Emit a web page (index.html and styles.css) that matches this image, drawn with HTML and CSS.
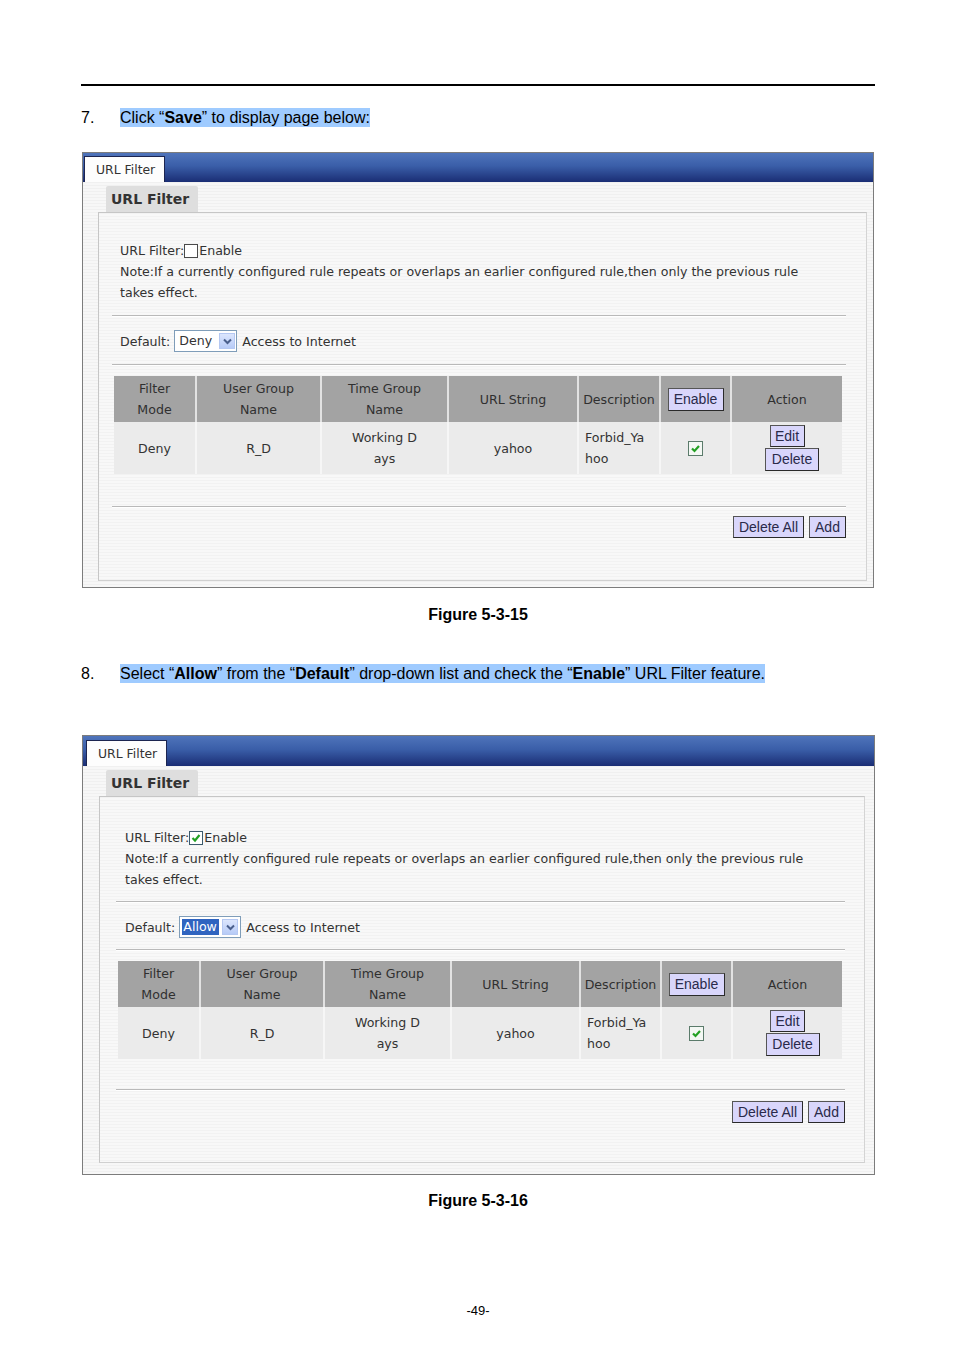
FILE: index.html
```html
<!DOCTYPE html>
<html>
<head>
<meta charset="utf-8">
<link rel="stylesheet" href="styles.css">
</head>
<body>
<div class="page">
  <div class="rule"></div>

  <p class="step step-7"><span class="num">7.</span><span class="hl">Click “<b>Save</b>” to display page below:</span></p>

  <div class="fig fig-a">
    <div class="fig-head"><div class="tab">URL Filter</div></div>
    <div class="fig-body">
      <div class="sec-tab">URL Filter</div>
      <div class="panel">
        <div class="info">
          <div class="line">URL Filter:<span class="cb"></span>Enable</div>
          <div class="line">Note:If a currently configured rule repeats or overlaps an earlier configured rule,then only the previous rule</div>
          <div class="line">takes effect.</div>
        </div>
        <div class="sep"></div>
        <div class="default-row">Default:<span class="select"><span class="sel-val">Deny</span><span class="sel-btn"><svg width="13" height="13" viewBox="0 0 13 13"><path d="M3 4.5 L6.5 8 L10 4.5" stroke="#4a5f8c" stroke-width="2" fill="none"/></svg></span></span>Access to Internet</div>
        <div class="sep"></div>
        <table class="rules">
          <colgroup><col class="c1"><col class="c2"><col class="c3"><col class="c4"><col class="c5"><col class="c6"><col class="c7"></colgroup>
          <tr class="hrow">
            <th>Filter<br>Mode</th>
            <th>User Group<br>Name</th>
            <th>Time Group<br>Name</th>
            <th>URL String</th>
            <th>Description</th>
            <th><span class="btn btn-enable">Enable</span></th>
            <th>Action</th>
          </tr>
          <tr class="drow">
            <td>Deny</td>
            <td>R_D</td>
            <td>Working D<br>ays</td>
            <td>yahoo</td>
            <td class="left">Forbid_Ya<br>hoo</td>
            <td><svg class="chk" width="15" height="15" viewBox="0 0 15 15"><rect x="0.5" y="0.5" width="14" height="14" fill="#f4f8f4" stroke="#5b7b6b"/><path d="M4 7.5 L6.5 10 L11 5" stroke="#23a023" stroke-width="2.2" fill="none"/></svg></td>
            <td class="act"><span class="btn btn-edit">Edit</span><span class="btn btn-del">Delete</span></td>
          </tr>
        </table>
        <div class="sep sep-low"></div>
        <div class="btn-row"><span class="btn btn-delall">Delete All</span><span class="btn btn-add">Add</span></div>
      </div>
    </div>
  </div>

  <p class="caption cap-a">Figure 5-3-15</p>

  <p class="step step-8"><span class="num">8.</span><span class="hl">Select “<b>Allow</b>” from the “<b>Default</b>” drop-down list and check the “<b>Enable</b>” URL Filter feature.</span></p>

  <div class="fig fig-b">
    <div class="fig-head"><div class="tab">URL Filter</div></div>
    <div class="fig-body">
      <div class="sec-tab">URL Filter</div>
      <div class="panel">
        <div class="info">
          <div class="line">URL Filter:<svg class="cb-on" width="14" height="14" viewBox="0 0 14 14"><rect x="0.5" y="0.5" width="13" height="13" fill="#fff" stroke="#3c5a6c"/><path d="M3.5 7 L6 9.5 L10.5 4" stroke="#22a022" stroke-width="2.2" fill="none"/></svg>Enable</div>
          <div class="line">Note:If a currently configured rule repeats or overlaps an earlier configured rule,then only the previous rule</div>
          <div class="line">takes effect.</div>
        </div>
        <div class="sep"></div>
        <div class="default-row">Default:<span class="select"><span class="sel-val sel-hl">Allow</span><span class="sel-btn"><svg width="13" height="13" viewBox="0 0 13 13"><path d="M3 4.5 L6.5 8 L10 4.5" stroke="#4a5f8c" stroke-width="2" fill="none"/></svg></span></span>Access to Internet</div>
        <div class="sep"></div>
        <table class="rules">
          <colgroup><col class="c1"><col class="c2"><col class="c3"><col class="c4"><col class="c5"><col class="c6"><col class="c7"></colgroup>
          <tr class="hrow">
            <th>Filter<br>Mode</th>
            <th>User Group<br>Name</th>
            <th>Time Group<br>Name</th>
            <th>URL String</th>
            <th>Description</th>
            <th><span class="btn btn-enable">Enable</span></th>
            <th>Action</th>
          </tr>
          <tr class="drow">
            <td>Deny</td>
            <td>R_D</td>
            <td>Working D<br>ays</td>
            <td>yahoo</td>
            <td class="left">Forbid_Ya<br>hoo</td>
            <td><svg class="chk" width="15" height="15" viewBox="0 0 15 15"><rect x="0.5" y="0.5" width="14" height="14" fill="#f4f8f4" stroke="#5b7b6b"/><path d="M4 7.5 L6.5 10 L11 5" stroke="#23a023" stroke-width="2.2" fill="none"/></svg></td>
            <td class="act"><span class="btn btn-edit">Edit</span><span class="btn btn-del">Delete</span></td>
          </tr>
        </table>
        <div class="sep sep-low"></div>
        <div class="btn-row"><span class="btn btn-delall">Delete All</span><span class="btn btn-add">Add</span></div>
      </div>
    </div>
  </div>

  <p class="caption cap-b">Figure 5-3-16</p>

  <p class="pageno">-49-</p>
</div>
</body>
</html>
```

FILE: styles.css
```css
html, body {
  margin: 0;
  padding: 0;
  background: #fff;
}
body {
  font-family: "Liberation Sans", Arial, sans-serif;
  color: #000;
}
.page {
  width: 794px;
  padding: 84px 0 0 81px;
}
.rule {
  border-top: 2px solid #000;
}
.step {
  margin: 0;
  font-size: 16px;
  line-height: 19px;
  display: flex;
}
.step-7 { margin-top: 22px; }
.step-8 { margin-top: 40px; }
.step .num {
  width: 39px;
  flex: none;
}
.hl {
  background: #9fcbff;
}
.caption {
  margin: 0;
  text-align: center;
  font-weight: bold;
  font-size: 16px;
  line-height: 19px;
}
.cap-a { margin-top: 17px; }
.cap-b { margin-top: 16px; }
.pageno {
  margin: 93px 0 0 0;
  text-align: center;
  font-size: 13px;
  line-height: 16px;
}

/* figure */
.fig {
  margin-left: 1px;
  border: 1px solid #7c7c7c;
  width: 790px;
  font-family: "DejaVu Sans", sans-serif;
  font-size: 12.6px;
  color: #333;
}
.fig-a { margin-top: 25px; }
.fig-b { margin-top: 52px; width: 791px; }
.fig-head {
  height: 29px;
  background: linear-gradient(to bottom, #4f74bb 0%, #3a5ea8 45%, #1a2d74 100%);
  position: relative;
}
.fig-b .fig-head { height: 30px; }
.tab {
  position: absolute;
  left: 1px;
  bottom: 0;
  width: 68px;
  height: 25px;
  padding-left: 11px;
  background: #fdfdfd;
  border: 1px solid #1c2550;
  border-bottom: none;
  font-size: 12.4px;
  line-height: 26px;
  color: #333;
  white-space: nowrap;
}
.fig-b .tab { left: 3px; }
.fig-body {
  background: repeating-linear-gradient(to bottom, #f0f0f0 0px, #f0f0f0 1px, #f7f7f7 1px, #f7f7f7 3px);
  padding: 4px 6px 6px 15px;
}
.fig-b .fig-body { padding: 4px 9px 11px 16px; }
.sec-tab {
  margin-left: 8px;
  width: 87px;
  height: 26px;
  padding-left: 5px;
  background: #dedede;
  border-radius: 2px 2px 0 0;
  font-family: "DejaVu Sans", sans-serif;
  font-weight: bold;
  font-size: 14px;
  line-height: 27px;
  color: #333;
}
.fig-b .sec-tab { margin-left: 7px; }
.panel {
  border: 1px solid #c6c6c6;
  border-right-color: #d4d4d4;
  border-bottom-color: #d0d0d0;
  padding: 0 20px 42px 13px;
  background: repeating-linear-gradient(to bottom, #f2f2f2 0px, #f2f2f2 1px, #f8f8f8 1px, #f8f8f8 3px);
}
.fig-b .panel { padding: 0 19px 39px 16px; }
.info {
  padding: 27px 0 0 8px;
}
.fig-b .info { padding: 30px 0 0 9px; }
.line {
  line-height: 21px;
  height: 21px;
  white-space: nowrap;
  display: flex;
  align-items: center;
}
.cb {
  width: 12px;
  height: 12px;
  border: 1px solid #4a4a4a;
  background: #fff;
  margin-right: 1px;
}
.cb-on { margin-right: 1px; }
.sep {
  border-top: 1px solid #b9b9b9;
  border-bottom: 1px solid #fff;
  margin-top: 12px;
}
.fig-b .sep { margin-top: 11px; }
.sep-low { margin-top: 32px; }
.fig-b .sep-low { margin-top: 30px; }
.default-row {
  margin-top: 13px;
  padding-left: 8px;
  height: 22px;
  display: flex;
  align-items: center;
}
.fig-b .default-row { padding-left: 9px; }
.select {
  display: flex;
  align-items: center;
  width: 61px;
  height: 20px;
  border: 1px solid #7f9db9;
  background: #fff;
  margin: 0 5px 0 4px;
}
.sel-val {
  margin-left: 4px;
  flex: 1;
  line-height: 16px;
}
.sel-hl {
  flex: none;
  margin-left: 2px;
  margin-right: 3px;
  padding: 0 1px;
  background: #2f64c0;
  color: #fff;
  width: 35px;
}
.sel-btn {
  width: 16px;
  height: 16px;
  margin-right: 1px;
  border: 1px solid #b5c8f2;
  background: linear-gradient(to bottom, #dce6fd, #b7cbf7);
  display: flex;
  align-items: center;
  justify-content: center;
  box-sizing: border-box;
}
.fig-b .select { width: 60px; }
.rules {
  margin: 10px 0 0 2px;
  width: 728px;
  border-collapse: collapse;
  table-layout: fixed;
}
.fig-b .rules { width: 724px; }
.c1 { width: 82px; }
.c2 { width: 125px; }
.c3 { width: 127px; }
.c4 { width: 130px; }
.c5 { width: 82px; }
.c6 { width: 71px; }
.c7 { width: 111px; }
.fig-b .c1 { width: 82px; }
.fig-b .c2 { width: 124px; }
.fig-b .c3 { width: 127px; }
.fig-b .c4 { width: 129px; }
.fig-b .c5 { width: 81px; }
.fig-b .c6 { width: 71px; }
.fig-b .c7 { width: 110px; }
.rules th, .rules td {
  padding: 0;
  text-align: center;
  line-height: 21px;
  font-weight: normal;
  border-left: 2px solid #e2e2e2;
  white-space: nowrap;
}
.rules th:first-child, .rules td:first-child { border-left: none; }
.hrow th {
  height: 46px;
  background: #a3a3a3;
  color: #303030;
}
.drow td {
  height: 52px;
  background: #ebebeb;
  color: #333;
  border-left-color: #f6f6f6;
}
.rules td.left { text-align: left; padding-left: 6px; }
.chk { display: block; margin: 0 auto; }
.btn {
  display: inline-block;
  box-sizing: border-box;
  height: 22px;
  background: #d9d6fb;
  border: 1px solid #555;
  border-right-color: #2a2a2a;
  border-bottom-color: #2a2a2a;
  font-family: "Liberation Sans", Arial, sans-serif;
  font-size: 14px;
  line-height: 20px;
  color: #2a2a4a;
  text-align: center;
}
.btn-enable { width: 56px; height: 23px; line-height: 21px; }
.act { line-height: 0 !important; }
.act .btn { display: block; margin: 0 auto; }
.btn-edit { width: 35px; height: 22px; position: relative; left: 0px; }
.btn-del { width: 54px; height: 23px; margin-top: 1px !important; position: relative; left: 5px; line-height: 21px; }
.btn-row {
  margin-top: 8px;
  display: flex;
  justify-content: flex-end;
  gap: 5px;
}
.fig-b .btn-row { margin-top: 10px; }
.btn-delall { width: 71px; }
.btn-add { width: 37px; }
```
